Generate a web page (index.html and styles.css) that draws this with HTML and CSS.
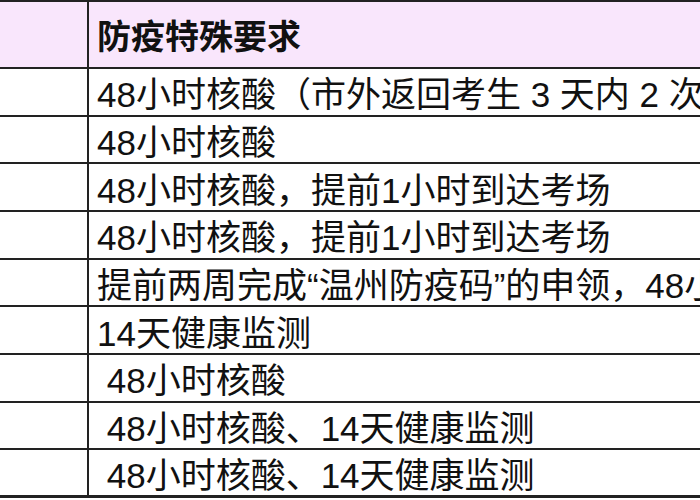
FILE: index.html
```html
<!DOCTYPE html>
<html lang="zh-CN">
<head>
<meta charset="utf-8">
<title>防疫特殊要求</title>
<link rel="stylesheet" href="styles.css">
</head>
<body>
<div class="sheet">
  <div class="row head">
    <div class="cell key"></div>
    <div class="cell val">防疫特殊要求</div>
  </div>
  <div class="row"><div class="cell key"></div><div class="cell val">48小时核酸（市外返回考生 3 天内 2 次核酸证明）</div></div>
  <div class="row"><div class="cell key"></div><div class="cell val">48小时核酸</div></div>
  <div class="row"><div class="cell key"></div><div class="cell val">48小时核酸，提前1小时到达考场</div></div>
  <div class="row"><div class="cell key"></div><div class="cell val">48小时核酸，提前1小时到达考场</div></div>
  <div class="row"><div class="cell key"></div><div class="cell val">提前两周完成“温州防疫码”的申领，48小时核酸</div></div>
  <div class="row"><div class="cell key"></div><div class="cell val">14天健康监测</div></div>
  <div class="row"><div class="cell key"></div><div class="cell val"> 48小时核酸</div></div>
  <div class="row"><div class="cell key"></div><div class="cell val"> 48小时核酸、14天健康监测</div></div>
  <div class="row last"><div class="cell key"></div><div class="cell val"> 48小时核酸、14天健康监测</div></div>
</div>
</body>
</html>
```
FILE: styles.css
```css
html, body {
  margin: 0;
  padding: 0;
  background: #ffffff;
  overflow: hidden;
}
.sheet {
  width: 1200px;
  border-top: 2px solid #222;
  font-family: "Liberation Sans", "Noto Sans CJK SC", sans-serif;
  font-size: 35px;
  color: #111;
}
.row {
  display: flex;
  height: 47.67px;
  box-sizing: border-box;
  border-bottom: 2px solid #222;
}
.row.head {
  height: 67px;
  background: #f9e6fc;
  font-weight: bold;
  font-size: 34px;
}
.row.last {
  border-bottom-width: 3px;
}
.cell {
  display: flex;
  align-items: center;
  box-sizing: border-box;
  white-space: pre;
}
.key {
  width: 89px;
  flex: none;
  border-right: 2px solid #222;
}
.val {
  flex: 1;
  padding-left: 8px;
}
```
